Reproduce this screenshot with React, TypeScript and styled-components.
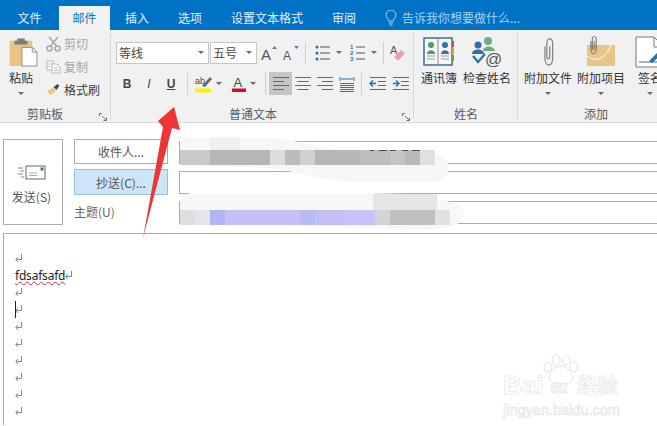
import React from "react";
import styled, { createGlobalStyle } from "styled-components";

const Global = createGlobalStyle`
  html, body { margin: 0; padding: 0; background: #fff; overflow: hidden; }
  * { box-sizing: border-box; }
`;

const Page = styled.div`
  position: relative;
  width: 657px;
  height: 426px;
  overflow: hidden;
  background: #fff;
  font-family: "Noto Sans CJK SC", "Noto Sans", sans-serif;
  font-size: 12px;
  color: #444;
`;

const TabBar = styled.div`
  display: flex;
  height: 30px;
  background: #0072c6;
  align-items: stretch;
  padding-top: 6px;
`;

const Tab = styled.div<{ $active?: boolean; $w: number }>`
  width: ${(p) => p.$w}px;
  display: flex;
  align-items: center;
  justify-content: center;
  padding-bottom: 1px;
  color: ${(p) => (p.$active ? "#1777bd" : "#e6f1fa")};
  background: ${(p) => (p.$active ? "#f1f1f1" : "transparent")};
  font-size: 12px;
`;

const TellMe = styled.div`
  display: flex;
  align-items: center;
  gap: 5px;
  margin-left: 15px;
  padding-bottom: 1px;
  color: #a9d3f0;
  font-size: 12px;
`;

const Ribbon = styled.div`
  display: flex;
  height: 93px;
  background: #f1f1f1;
  border-bottom: 1px solid #d6d6d6;
  overflow: hidden;
`;

const Group = styled.div<{ $w: number }>`
  position: relative;
  flex: 0 0 ${(p) => p.$w}px;
  width: ${(p) => p.$w}px;
  display: flex;
  flex-direction: column;
  &::after {
    content: "";
    position: absolute;
    right: 0;
    top: 3px;
    bottom: 3px;
    width: 1px;
    background: #d8d8d8;
  }
`;

const GroupBody = styled.div`
  flex: 1;
  display: flex;
  min-height: 0;
`;

const GroupLabel = styled.div<{ $pr?: number }>`
  height: 18px;
  line-height: 20px;
  text-align: center;
  padding-right: ${(p) => p.$pr ?? 0}px;
  color: #5a5a5a;
  font-size: 12px;
  position: relative;
`;

const Launcher = styled.svg`
  position: absolute;
  right: 4px;
  top: 9px;
`;

const BigButton = styled.div<{ $w: number; $ml?: number }>`
  width: ${(p) => p.$w}px;
  margin-left: ${(p) => p.$ml ?? 0}px;
  display: flex;
  flex-direction: column;
  align-items: center;
  padding-top: 6px;
  flex-shrink: 0;
`;

const BigIcon = styled.div`
  height: 32px;
  display: flex;
  align-items: center;
  justify-content: center;
`;

const BigLabel = styled.div`
  margin-top: 1px;
  line-height: 18px;
  color: #333;
  white-space: nowrap;
`;

const Caret = styled.span`
  display: inline-block;
  width: 0;
  height: 0;
  border-left: 3px solid transparent;
  border-right: 3px solid transparent;
  border-top: 3px solid #6a6a6a;
`;

const BigCaret = styled(Caret)`
  margin-top: 5px;
`;

const SmallColumn = styled.div`
  display: flex;
  flex-direction: column;
  padding-top: 2px;
  margin-left: 4px;
`;

const SmallRow = styled.div<{ $disabled?: boolean }>`
  height: 23px;
  display: flex;
  align-items: center;
  gap: 3px;
  color: ${(p) => (p.$disabled ? "#a6a6a6" : "#3c3c3c")};
`;

const FontColumn = styled.div`
  display: flex;
  flex-direction: column;
  padding: 11px 0 0 5px;
  gap: 8px;
`;

const ToolRow = styled.div`
  display: flex;
  align-items: center;
  height: 23px;
`;

const Select = styled.div<{ $w: number }>`
  width: ${(p) => p.$w}px;
  height: 22px;
  margin-right: 1px;
  background: #fff;
  border: 1px solid #c6c6c6;
  display: flex;
  align-items: center;
  justify-content: space-between;
  padding: 0 4px 0 2px;
  color: #444;
`;

const Tool = styled.div<{ $w: number; $active?: boolean; $gap?: number }>`
  width: ${(p) => p.$w}px;
  height: 23px;
  flex-shrink: 0;
  display: flex;
  align-items: center;
  justify-content: center;
  gap: ${(p) => p.$gap ?? 3}px;
  background: ${(p) => (p.$active ? "#c6c6c6" : "transparent")};
`;

const Glyph = styled.span<{ $i?: boolean; $u?: boolean }>`
  font-family: "Liberation Sans", Arial, sans-serif;
  font-size: 12px;
  color: #444;
  font-weight: ${(p) => (p.$i ? 400 : 700)};
  font-style: ${(p) => (p.$i ? "italic" : "normal")};
  text-decoration: ${(p) => (p.$u ? "underline" : "none")};
`;

const Sep = styled.div<{ $ml: number; $mr: number }>`
  width: 1px;
  height: 22px;
  margin: 0 ${(p) => p.$mr}px 0 ${(p) => p.$ml}px;
  background: #d0d0d0;
  flex-shrink: 0;
`;

const Compose = styled.div`
  display: flex;
  height: 110px;
  padding: 16px 0 0 3px;
`;

const SendButton = styled.div`
  width: 60px;
  height: 86px;
  border: 1px solid #ababab;
  display: flex;
  flex-direction: column;
  align-items: center;
  padding: 25px 3px 0 0;
  gap: 7px;
  color: #555;
  background: #fff;
`;

const LabelColumn = styled.div`
  width: 94px;
  margin-left: 11px;
  display: flex;
  flex-direction: column;
  gap: 5px;
`;

const AddressButton = styled.div<{ $on?: boolean }>`
  height: ${(p) => (p.$on ? 26 : 25)}px;
  border: 1px solid ${(p) => (p.$on ? "#93c0df" : "#ababab")};
  background: ${(p) => (p.$on ? "#cde6f7" : "#fff")};
  display: flex;
  align-items: center;
  justify-content: center;
  color: #555;
`;

const SubjectLabel = styled.div`
  height: 24px;
  line-height: 24px;
  color: #666;
`;

const FieldColumn = styled.div`
  flex: 1;
  margin-left: 11px;
  padding-top: 2px;
  display: flex;
  flex-direction: column;
  gap: 7px;
`;

const Field = styled.div`
  height: 23px;
  border: 1px solid #ababab;
  border-right: none;
  background: #fff;
`;

const Body = styled.div`
  height: 192px;
  margin-left: 3px;
  border-top: 1px solid #ababab;
  border-left: 1px solid #ababab;
  padding: 16px 0 0 11px;
  color: #222;
`;

const Line = styled.div`
  position: relative;
  height: 17px;
  line-height: 17px;
  font-family: "Noto Sans", sans-serif;
  font-size: 12px;
  letter-spacing: -0.2px;
  display: flex;
  align-items: center;
`;

const Misspelled = styled.span`
  text-decoration: underline wavy #d0343a 1px;
  text-underline-offset: 1px;
`;

const Cursor = styled.span`
  position: absolute;
  left: 0;
  top: 0;
  width: 1px;
  height: 17px;
  background: #222;
`;

const Overlay = styled.svg`
  position: absolute;
  left: 0;
  top: 0;
  pointer-events: none;
`;

const Watermark = styled.div`
  position: absolute;
  left: 503px;
  top: 369px;
  width: 118px;
  color: #fff;
  font-family: "Liberation Sans", sans-serif;
  -webkit-text-stroke: 0.6px #e2e2e2;
`;

const WmTop = styled.div`
  display: flex;
  align-items: center;
  font-size: 26px;
  font-weight: 700;
  line-height: 26px;
`;

const WmDu = styled.span`
  position: relative;
  z-index: 1;
  margin-left: 7px;
  font-size: 14px;
  padding-top: 6px;
`;

const WmCn = styled.span`
  font-family: "Noto Sans CJK SC", sans-serif;
  font-size: 20px;
  margin-left: 10px;
`;

const WmBottom = styled.div`
  font-size: 14.5px;
  line-height: 14px;
  margin-top: 2px;
  white-space: nowrap;
`;

const PawHolder = styled.div`
  position: absolute;
  left: 40px;
  top: -14px;
`;

const Paste = () => (
  <svg width="38" height="30" viewBox="-7 0 40 32">
    <rect x="1" y="4" width="24" height="27" fill="#e8c584" />
    <path d="M9 4V1.5h8V4h3v4H6V4z" fill="#7d7d7d" />
    <path d="M14 11h11l5 5v15H14z" fill="#fff" stroke="#8a8a8a" />
    <path d="M25 11v5h5" fill="none" stroke="#8a8a8a" />
  </svg>
);

const Scissors = () => (
  <svg width="15" height="16" viewBox="0 0 15 16" fill="none" stroke="#a9a9a9" strokeWidth="1.6">
    <circle cx="3.5" cy="12.5" r="2.5" />
    <circle cx="11.5" cy="12.5" r="2.5" />
    <path d="M10.5 10 3 1M4.5 10 12 1" />
  </svg>
);

const CopyIcon = () => (
  <svg width="15" height="14" viewBox="0 0 15 14" fill="#fff" stroke="#b5b5b5">
    <path d="M1 1h6v9H1z" />
    <path d="M6 4h5l3 3v6H6z" />
    <path d="M8 8h4M8 10.500h4M2.500 4h3M2.500 6.500h2" />
  </svg>
);

const Brush = () => (
  <svg width="15" height="15" viewBox="0 0 18 15">
    <path d="M1 10 8 5l4 4-6 5z" fill="#e8c98e" />
    <path d="M9 4.500 14 1l2 2-3.500 5z" fill="#444" />
  </svg>
);

const AIcon = ({ up }: { up: boolean }) => (
  <svg width="18" height="18" viewBox="0 0 18 18">
    <text x="1" y="16" fontFamily="Liberation Sans" fontSize={up ? 15 : 12} fill="#555">A</text>
    <path d={up ? "M12 5l2.500-3L17 5z" : "M12 2h5l-2.500 3z"} fill="#5d7f9c" />
  </svg>
);

const Bullets = () => (
  <svg width="15" height="16" viewBox="0 0 15 16">
    {[2, 8, 14].map((y) => (
      <React.Fragment key={y}>
        <circle cx="2" cy={y} r="1.500" fill="#2b6ea5" />
        <path d={`M5 ${y}h10`} stroke="#555" />
      </React.Fragment>
    ))}
  </svg>
);

const Numbers = () => (
  <svg width="15" height="18" viewBox="0 0 15 18">
    {[4, 10, 16].map((y, i) => (
      <React.Fragment key={y}>
        <text x="0" y={y + 1} fontSize="6" fontFamily="Liberation Sans" fontWeight="700" fill="#2b6ea5">{i + 1}</text>
        <path d={`M6 ${y - 1}h9`} stroke="#555" />
      </React.Fragment>
    ))}
  </svg>
);

const ClearFormat = () => (
  <svg width="18" height="19" viewBox="0 0 18 19">
    <text x="0" y="11" fontSize="11" fontFamily="Liberation Sans" fill="#555">A</text>
    <path d="M4 14l7-7 4 3-6 7H7z" fill="#eda0a8" />
  </svg>
);

const Highlight = () => (
  <svg width="18" height="18" viewBox="0 0 18 18">
    <text x="0" y="9" fontSize="9" fontFamily="Liberation Sans" fill="#444">ab</text>
    <path d="M7 11 15 2l2 2-7 8z" fill="#666" />
    <rect x="0" y="13.500" width="16" height="4" fill="#fff200" />
  </svg>
);

const FontColor = () => (
  <svg width="16" height="18" viewBox="0 0 16 18">
    <text x="2.500" y="12" fontSize="13" fontFamily="Liberation Sans" fill="#444">A</text>
    <rect x="1" y="13.500" width="14" height="3.500" fill="#c8102e" />
  </svg>
);

const Align = ({ kind }: { kind: "l" | "c" | "r" }) => {
  const ws = [16, 11, 16, 11];
  return (
    <svg width="16" height="13" viewBox="0 0 16 13" stroke="#666">
      {ws.map((w, i) => {
        const x = kind === "l" ? 0 : kind === "r" ? 16 - w : (16 - w) / 2;
        return <path key={i} d={`M${x} ${i * 4 + 0.5}h${w}`} />;
      })}
    </svg>
  );
};

const Justify = () => (
  <svg width="16" height="16" viewBox="0 0 16 16" fill="none">
    <path d="M1 1v4M15 1v4M2 3h12" stroke="#2b6ea5" />
    <path d="M1 7.500h14M1 9.500h14M1 11.500h14M1 13.500h14M1 15.500h14" stroke="#666" />
  </svg>
);

const Indent = ({ dir }: { dir: "in" | "out" }) => (
  <svg width="17" height="13" viewBox="0 0 17 13" fill="none">
    <path d="M1 .5h16M1 12.500h16M9 4.500h8M9 8.500h8" stroke="#666" />
    {dir === "out" ? (
      <path d="M1 6.500h6M4 3.500l-3 3 3 3" stroke="#2b6ea5" strokeWidth="1.400" />
    ) : (
      <path d="M1 6.500h6M4 3.500l3 3-3 3" stroke="#2b6ea5" strokeWidth="1.400" />
    )}
  </svg>
);

const AddressBook = () => (
  <svg width="32" height="32" viewBox="0 0 32 32">
    <path d="M1 2h28v27H1z" fill="#f7f7f7" stroke="#3f6e92" strokeWidth="1.500" />
    <path d="M15 2v27" stroke="#8a8a8a" />
    <rect x="29" y="5" width="2" height="6" fill="#c94f4f" />
    <rect x="29" y="12" width="2" height="6" fill="#e5a23c" />
    <rect x="29" y="19" width="2" height="6" fill="#5f9f5f" />
    <circle cx="8" cy="9" r="3" fill="#4f9a72" />
    <path d="M4 18c0-5 8-5 8 0z" fill="#4f9a72" />
    <path d="M4 20h8M4 23h8" stroke="#9a9a9a" />
    <circle cx="22" cy="9" r="3" fill="#2f6fa3" />
    <path d="M18 18c0-5 8-5 8 0z" fill="#2f6fa3" />
    <path d="M18 20h8M18 23h8" stroke="#9a9a9a" />
  </svg>
);

const CheckNames = () => (
  <svg width="32" height="32" viewBox="0 0 32 32">
    <circle cx="17" cy="5" r="4" fill="#6fa888" />
    <path d="M12 15c0-6 11-6 12 0z" fill="#6fa888" />
    <circle cx="7" cy="9" r="3.500" fill="#2f6fa3" />
    <path d="M1 18c0-6 12-6 12 0z" fill="#2f6fa3" />
    <path d="M2 20l5 6 7-8" fill="none" stroke="#2f6fa3" strokeWidth="2.200" />
    <text x="14" y="29" fontSize="17" fontFamily="Liberation Sans" fill="#555">@</text>
  </svg>
);

const Clip = ({ h = 28 }: { h?: number }) => (
  <svg width={h * 0.45} height={h} viewBox="0 0 13 28" fill="none" stroke="#7d7d7d" strokeWidth="1.200">
    <path d="M3 8v12c0 10 8 10 8 0V5C11-1 5-1 5 5v14c0 3 3 3 3 0V8" />
  </svg>
);

const AttachItem = () => (
  <svg width="30" height="32" viewBox="0 0 30 32">
    <rect x="1" y="9" width="28" height="21" fill="#e8c584" />
    <path d="M1 20c8 6 18 4 24-11" fill="none" stroke="#fff" />
    <g transform="translate(3 0) scale(.65)" fill="none" stroke="#666" strokeWidth="1.500">
      <path d="M3 8v12c0 10 8 10 8 0V5C11-1 5-1 5 5v14c0 3 3 3 3 0V8" />
    </g>
  </svg>
);

const Signature = () => (
  <svg width="30" height="32" viewBox="0 0 30 32">
    <path d="M1 1h18l10 10v20H1z" fill="#fff" stroke="#777" />
    <path d="M19 1v10h10" fill="none" stroke="#777" />
    <path d="M4 26h18" stroke="#2f6fa3" />
    <path d="M14 25l11-11 3 3-11 10z" fill="#2f6fa3" />
  </svg>
);

const Bulb = () => (
  <svg width="12" height="16" viewBox="0 0 12 16" fill="none" stroke="#a9d3f0">
    <path d="M3.500 11c0-3-2.500-3.500-2.500-6a5 5 0 0 1 10 0c0 2.500-2.500 3-2.500 6z" />
    <path d="M4 13h4M4.500 15h3" />
  </svg>
);

const SendIcon = () => (
  <svg width="28" height="16" viewBox="0 0 28 16" fill="none">
    <rect x="8" y="1" width="19" height="13" stroke="#666" fill="#fff" />
    <rect x="22.500" y="2.500" width="3" height="3" fill="#2f6fa3" />
    <path d="M11 8h8M11 10.500h8" stroke="#aaa" />
    <path d="M0 3h5M2 6h4M0 9h5M3 12h3" stroke="#888" />
  </svg>
);

const ReturnMark = () => (
  <svg width="8" height="9" viewBox="0 0 8 9" fill="none" stroke="#8a8a8a">
    <path d="M6.500 0v5.500H1M3 3 .8 5.500 3 8" />
  </svg>
);

const LauncherIcon = () => (
  <Launcher width="8" height="8" viewBox="0 0 8 8" fill="none" stroke="#777">
    <path d="M.5 3V.5H3M7.500 5v2.500H5M3 3l4 4M4.500 7.500h3v-3" />
  </Launcher>
);

const mosaic1: [number, number, string][] = [
  [180, 30, "#c9c9c9"], [210, 60, "#b6b6b6"], [270, 15, "#dcdcdc"], [285, 15, "#bcbcbc"], [300, 15, "#d0d0d0"],
  [315, 45, "#b6b6b6"], [360, 30, "#bdbdbd"], [390, 15, "#c4c4c4"], [405, 15, "#b8b8b8"], [420, 15, "#e0e0e0"],
];
const mosaic2: [number, number, string][] = [
  [180, 15, "#dedede"], [195, 15, "#e4e4ee"], [210, 15, "#b4b4f2"], [225, 75, "#c2c2f6"], [300, 15, "#b9b9f4"],
  [315, 30, "#c0c0f6"], [345, 30, "#c4c4f8"], [375, 15, "#d4d4d4"], [390, 45, "#bfbfbf"], [435, 15, "#e2e2e2"],
];

const Smears = () => (
  <Overlay width="657" height="426" viewBox="0 0 657 426">
    <path d="M183 137H253C275 137 290 140 303 143 325 148 345 151 360 152L430 153C442 154 448 160 448 165V175C444 181 432 183 420 183L353 182C330 181 310 176 293 172 275 168 255 167 237 167L180 165V142Z" fill="#f7f7f7" />
    <path d="M180 197 190 193H373L403 194 457 203 465 213 457 225 430 230 280 225 195 224 180 212Z" fill="#f7f7f7" />
    <rect x="210" y="138" width="30" height="12" fill="#f0f0f0" />
    <rect x="373" y="194" width="64" height="16" fill="#e6e6e6" />
    {mosaic1.map(([x, w, c]) => <rect key={x} x={x} y="150" width={w} height="15" fill={c} />)}
    {mosaic2.map(([x, w, c]) => <rect key={x} x={x} y="210" width={w} height="15" fill={c} />)}
    <path d="M370 150.500h4M379 150.500h8M390 150.500h6M402 150.500h6M412 150.500h8" stroke="#333" strokeWidth=".8" />
    <path d="M174 107 180 130 172 128 143 238 163 127 158 121z" fill="#ee3434" />
  </Overlay>
);

const WatermarkPaw = () => (
  <svg width="36" height="30" viewBox="0 0 36 30" fill="#fff" stroke="#e2e2e2">
    <ellipse cx="13" cy="5" rx="4" ry="5" />
    <ellipse cx="23" cy="5" rx="4" ry="5" />
    <ellipse cx="5" cy="12" rx="4" ry="5" />
    <ellipse cx="31" cy="12" rx="4" ry="5" />
    <path d="M18 11c7 0 12 8 12 12s-5 6-12 6-12-2-12-6 5-12 12-12z" />
  </svg>
);

const ribbon = (
  <Ribbon>
    <Group $w={111}>
      <GroupBody>
        <BigButton $w={42}>
          <BigIcon><Paste /></BigIcon>
          <BigLabel>粘贴</BigLabel>
          <BigCaret />
        </BigButton>
        <SmallColumn>
          <SmallRow $disabled><Scissors /><span>剪切</span></SmallRow>
          <SmallRow $disabled><CopyIcon /><span>复制</span></SmallRow>
          <SmallRow><Brush /><span>格式刷</span></SmallRow>
        </SmallColumn>
      </GroupBody>
      <GroupLabel $pr={21}>
        剪贴板
        <LauncherIcon />
      </GroupLabel>
    </Group>
    <Group $w={303}>
      <GroupBody>
        <FontColumn>
          <ToolRow>
            <Select $w={93}><span>等线</span><Caret /></Select>
            <Select $w={47}><span>五号</span><Caret /></Select>
            <Tool $w={22}><AIcon up /></Tool>
            <Tool $w={22}><AIcon up={false} /></Tool>
            <Sep $ml={3} $mr={3} />
            <Tool $w={38} $gap={6}><Bullets /><Caret /></Tool>
            <Tool $w={32} $gap={6}><Numbers /><Caret /></Tool>
            <Sep $ml={4} $mr={4} />
            <Tool $w={22}><ClearFormat /></Tool>
          </ToolRow>
          <ToolRow>
            <Tool $w={22}><Glyph>B</Glyph></Tool>
            <Tool $w={22}><Glyph $i>I</Glyph></Tool>
            <Tool $w={22}><Glyph $u>U</Glyph></Tool>
            <Sep $ml={5} $mr={3} />
            <Tool $w={34}><Highlight /><Caret /></Tool>
            <Tool $w={37}><FontColor /><Caret /></Tool>
            <Sep $ml={3} $mr={3} />
            <Tool $w={23} $active><Align kind="l" /></Tool>
            <Tool $w={21}><Align kind="c" /></Tool>
            <Tool $w={23}><Align kind="r" /></Tool>
            <Tool $w={22}><Justify /></Tool>
            <Sep $ml={3} $mr={3} />
            <Tool $w={24}><Indent dir="out" /></Tool>
            <Tool $w={22}><Indent dir="in" /></Tool>
          </ToolRow>
        </FontColumn>
      </GroupBody>
      <GroupLabel $pr={19}>
        普通文本
        <LauncherIcon />
      </GroupLabel>
    </Group>
    <Group $w={104}>
      <GroupBody>
        <BigButton $w={40} $ml={5}>
          <BigIcon><AddressBook /></BigIcon>
          <BigLabel>通讯簿</BigLabel>
        </BigButton>
        <BigButton $w={50} $ml={3}>
          <BigIcon><CheckNames /></BigIcon>
          <BigLabel>检查姓名</BigLabel>
        </BigButton>
      </GroupBody>
      <GroupLabel>姓名</GroupLabel>
    </Group>
    <Group $w={156}>
      <GroupBody>
        <BigButton $w={50} $ml={5}>
          <BigIcon><Clip /></BigIcon>
          <BigLabel>附加文件</BigLabel>
          <BigCaret />
        </BigButton>
        <BigButton $w={50} $ml={3}>
          <BigIcon><AttachItem /></BigIcon>
          <BigLabel>附加项目</BigLabel>
          <BigCaret />
        </BigButton>
        <BigButton $w={30} $ml={9}>
          <BigIcon><Signature /></BigIcon>
          <BigLabel>签名</BigLabel>
          <BigCaret />
        </BigButton>
      </GroupBody>
      <GroupLabel>添加</GroupLabel>
    </Group>
  </Ribbon>
);

export default function App() {
  const blanks = 8;
  return (
    <Page>
      <Global />
      <TabBar>
        <Tab $w={59}>文件</Tab>
        <Tab $w={51} $active>邮件</Tab>
        <Tab $w={54}>插入</Tab>
        <Tab $w={52}>选项</Tab>
        <Tab $w={102}>设置文本格式</Tab>
        <Tab $w={52}>审阅</Tab>
        <TellMe><Bulb />告诉我你想要做什么...</TellMe>
      </TabBar>
      {ribbon}
      <Compose>
        <SendButton>
          <SendIcon />
          <span>发送(S)</span>
        </SendButton>
        <LabelColumn>
          <AddressButton>收件人...</AddressButton>
          <AddressButton $on>抄送(C)...</AddressButton>
          <SubjectLabel>主题(U)</SubjectLabel>
        </LabelColumn>
        <FieldColumn>
          <Field />
          <Field />
          <Field />
        </FieldColumn>
      </Compose>
      <Body>
        <Line><ReturnMark /></Line>
        <Line><Misspelled>fdsafsafd</Misspelled><ReturnMark /></Line>
        {Array.from({ length: blanks }, (_, i) => (
          <Line key={i}>
            {i === 1 && <Cursor />}
            <ReturnMark />
          </Line>
        ))}
      </Body>
      <Smears />
      <Watermark>
        <PawHolder><WatermarkPaw /></PawHolder>
        <WmTop>Bai<WmDu>du</WmDu><WmCn>经验</WmCn></WmTop>
        <WmBottom>jingyan.baidu.com</WmBottom>
      </Watermark>
    </Page>
  );
}
